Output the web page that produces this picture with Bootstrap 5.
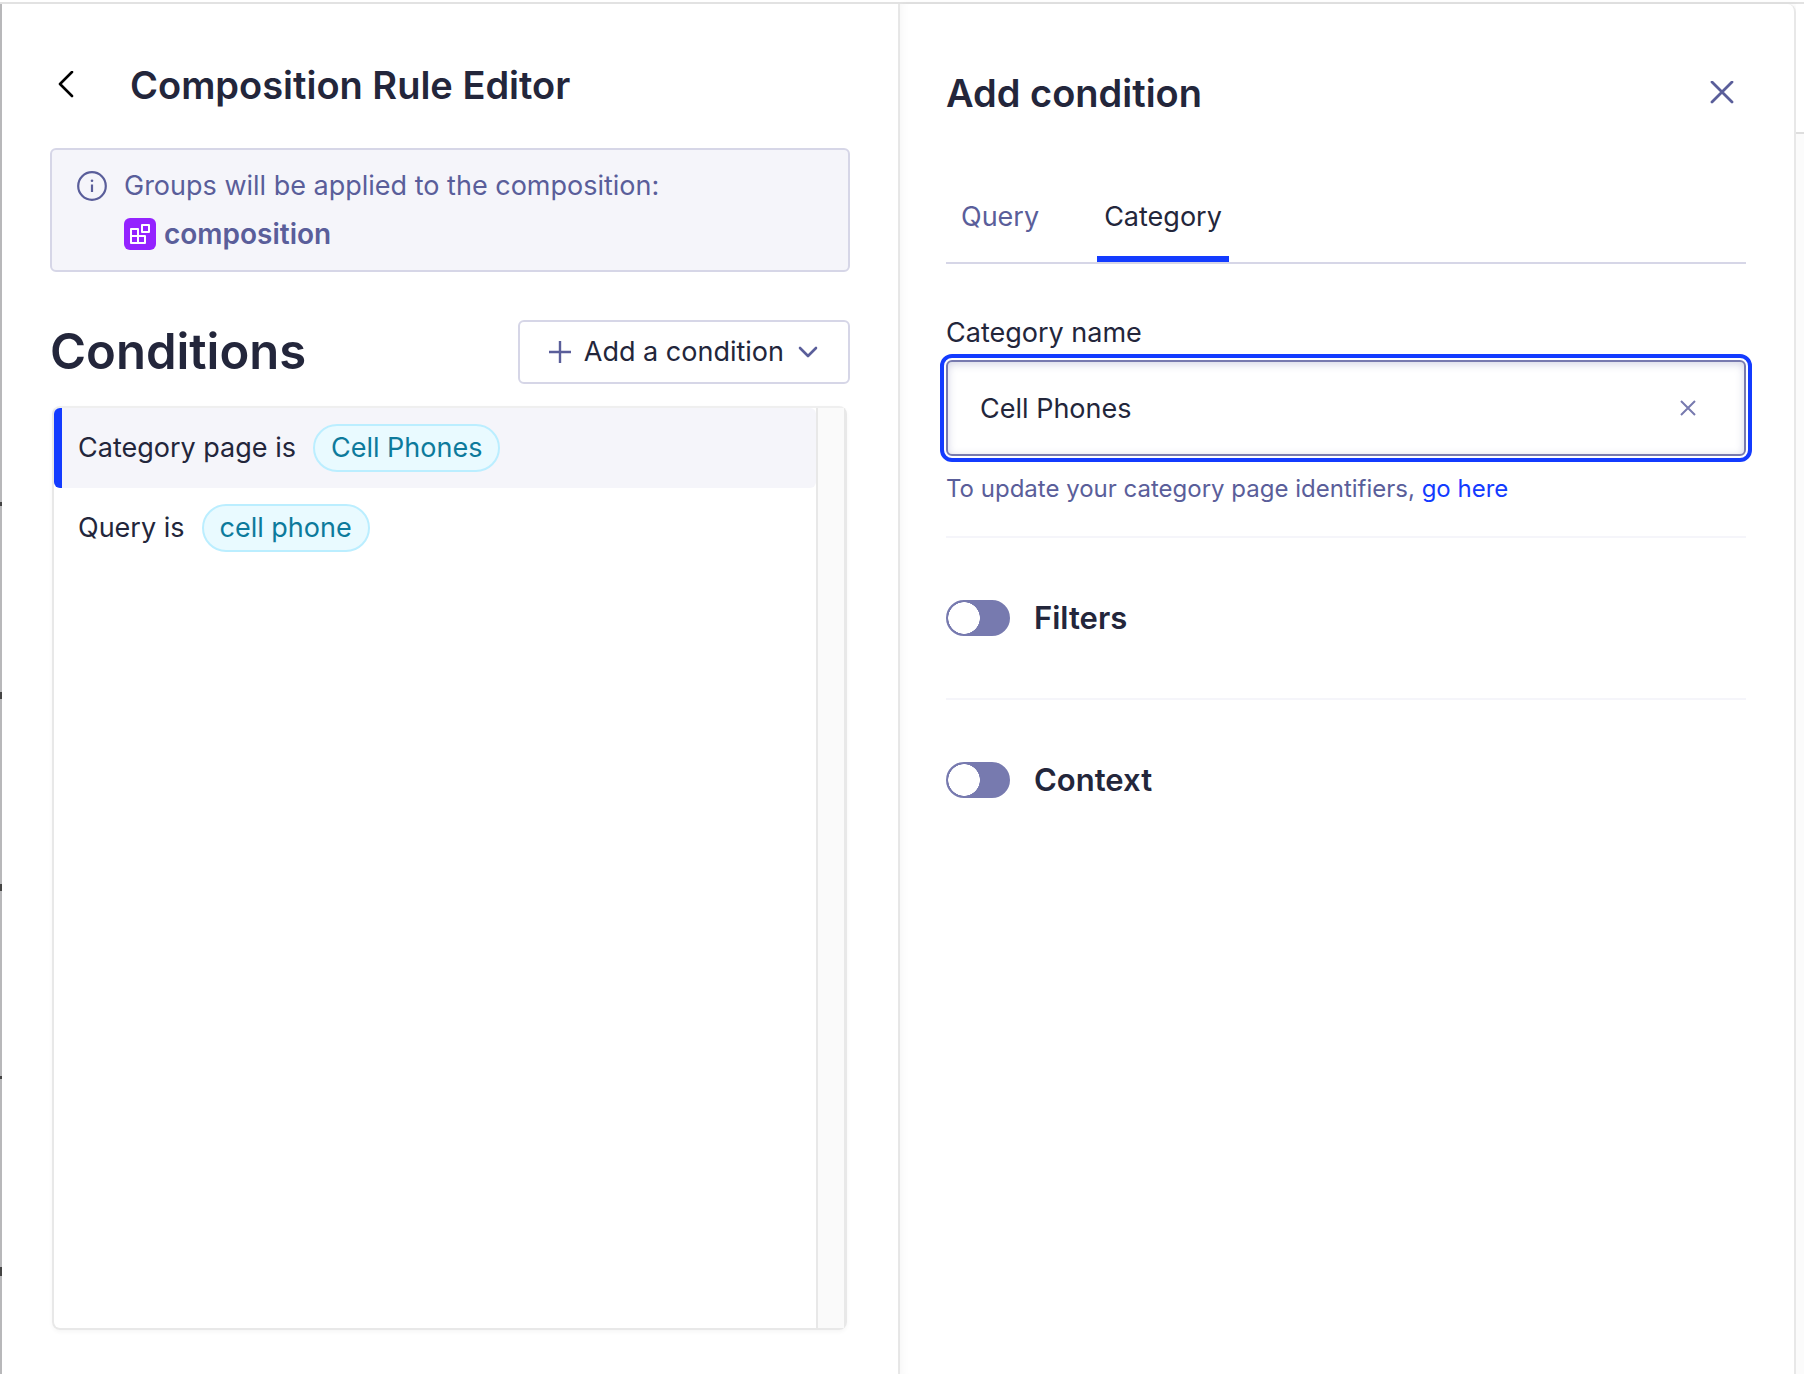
<!DOCTYPE html>
<html lang="en">
<head>
<meta charset="utf-8">
<meta name="viewport" content="width=device-width, initial-scale=1">
<title>Composition Rule Editor</title>
<link href="https://cdn.jsdelivr.net/npm/bootstrap@5.3.0/dist/css/bootstrap.min.css" rel="stylesheet">
<style>
:root{--ink:#23263b;--muted:#5a5e9a;--soft:#777aaf;--line:#d6d6e7;--blue:#133bff;--tint:#f5f5fa;--edge:#e8e8e8}
body{font-family:Inter,"Liberation Sans",sans-serif;font-size:27px;line-height:48px;color:var(--ink);background:#fff}
svg{flex:none;display:block;fill:none;stroke:currentColor}
.muted{color:var(--muted)}
.shell{border-top:2px solid #e2e2e2;margin-top:2px;min-height:calc(100vh - 2px)}
.page-edge{width:2px;background:
 linear-gradient(#444,#444) 0 498px/2px 4px no-repeat,
 linear-gradient(#444,#444) 0 688px/2px 7px no-repeat,
 linear-gradient(#444,#444) 0 880px/2px 7px no-repeat,
 linear-gradient(#444,#444) 0 1072px/2px 3px no-repeat,
 linear-gradient(#444,#444) 0 1263px/2px 9px no-repeat,#b8b8ba}
.pane{flex:1 1 0;min-width:0;border-right:2px solid var(--edge)}
.pane-list{padding:57px 48px 44px 48px}
.pane-form{padding:65px 48px 48px 46px;border-top-right-radius:8px;box-shadow:inset 8px 0 8px -6px #0000000a,2px 0 6px #0000000a}
.backdrop-page{width:8px;background:#fbfbfb}
.backdrop-page div{height:130px;background:#fff;border-bottom:2px solid #dedede}
.title{font-size:38px;line-height:48px;font-weight:600;margin:0}
.title-lg{font-size:49px;line-height:64px;font-weight:600;margin:0}
.plain{border:0;background:none;padding:0;color:inherit}
.head-gap{gap:56px;padding-left:8px}
.note{background:var(--tint);border:2px solid var(--line);border-radius:6px;padding:12px 25px;margin-top:39px;gap:17px;color:var(--muted)}
.note .glyph{margin-top:9px}
.comp-name{font-size:28px;font-weight:600}
.comp-tile{background:#9423ff;border-radius:6px;color:#fff}
.btn-add{border:2px solid var(--line);border-radius:6px;height:64px;padding:0 28px;font-size:27px;line-height:48px;color:var(--ink);gap:12px}
.btn-add svg{color:var(--muted)}
.rules{margin:22px 3px 0 2px;border:2px solid var(--edge);border-right-width:3px;border-top-color:#efefef;border-radius:8px;box-shadow:0 2px 4px #0000000a}
.rule{height:80px;padding:0 16px 0 24px;border:0;gap:17px;color:var(--ink)}
.rules .rule{border-radius:6px}
.rule.selected{background:var(--tint);border-left:8px solid var(--blue);padding-left:16px}
.tag{border:2px solid #bbeeff;background:#e9faff;color:#0d7a9c;border-radius:24px;padding:0 16px;line-height:44px}
.track{width:28px;border-left:2px solid var(--edge);background:#fafafa}
.tabs{border-bottom:2px solid var(--line);margin-top:59px;gap:51px;padding-left:8px}
.tabs .nav-link{color:var(--muted);padding:17px 7px 15px;border-radius:0;border-bottom:6px solid transparent}
.tabs .nav-link.active{color:var(--ink);border-bottom-color:var(--blue)}
.field-label{margin-top:45px;margin-bottom:3px}
.field{font-size:27px;line-height:48px;height:96px;padding:0 96px 0 32px;border:2px solid var(--soft);border-radius:6px;color:var(--ink);box-shadow:inset 0 2px 8px #777aaf55;outline:4px solid var(--blue);outline-offset:2px}
.field:focus{border-color:var(--soft);color:var(--ink);box-shadow:inset 0 2px 8px #777aaf55;outline:4px solid var(--blue)}
.clear{right:50px;top:40px;color:var(--soft)}
.help{font-size:24px;line-height:32px;color:var(--muted);padding:17px 0 31px}
.help a{color:var(--blue);text-decoration:none}
.option{border-top:2px solid var(--tint);padding:57px 0;gap:24px;font-size:31px;line-height:46px;font-weight:600}
.option .form-check-input{width:64px;height:36px;margin:0;border:2px solid var(--soft);background-color:var(--soft);background-image:radial-gradient(circle closest-side,#fff 97%,transparent);background-size:32px 32px;background-position:left center;background-repeat:no-repeat;border-radius:18px;flex:none}
</style>
<script src="https://cdn.jsdelivr.net/npm/bootstrap@5.3.0/dist/js/bootstrap.bundle.min.js"></script>
</head>
<body>
<div class="shell d-flex">
  <div class="page-edge"></div>

  <main class="pane pane-list d-flex flex-column">
    <header class="d-flex align-items-center head-gap">
      <button class="plain" type="button" aria-label="Back"><svg width="16" height="28" viewBox="0 0 16 28" stroke-width="2.6" stroke-linecap="round" stroke-linejoin="round" style="color:#000"><path d="M14 1 2 13l12 12"/></svg></button>
      <h1 class="title">Composition Rule Editor</h1>
    </header>

    <section class="note d-flex">
      <svg class="glyph" width="30" height="30" viewBox="0 0 30 30" stroke-width="2.2"><circle cx="15" cy="15" r="13.800"/><path d="M15 13.500v7.500"/><circle cx="15" cy="9.800" r="1.300" fill="currentColor" stroke="none"/></svg>
      <div>
        <div>Groups will be applied to the composition:</div>
        <div class="d-flex align-items-center gap-2 comp-name">
          <svg class="comp-tile" width="32" height="32" viewBox="0 0 32 32" stroke-width="2" stroke-linejoin="round"><path d="M7 11h7v14H7zM7 18h14v7H7zM18 7h7v7h-7z"/></svg>
          composition
        </div>
      </div>
    </section>

    <div class="d-flex align-items-center justify-content-between mt-5">
      <h2 class="title-lg">Conditions</h2>
      <button class="btn btn-add d-flex align-items-center" type="button">
        <svg width="24" height="24" viewBox="0 0 24 24" stroke-width="2.400"><path d="M12 1v22M1 12h22"/></svg>
        Add a condition
        <svg width="24" height="24" viewBox="0 0 24 24" stroke-width="2.600" stroke-linecap="round" stroke-linejoin="round"><path d="m4 8 8 8 8-8"/></svg>
      </button>
    </div>

    <div class="rules d-flex flex-grow-1">
      <div class="list-group flex-grow-1">
        <a href="#" class="list-group-item rule selected d-flex align-items-center">Category page is <span class="tag">Cell Phones</span></a>
        <a href="#" class="list-group-item rule d-flex align-items-center">Query is <span class="tag">cell phone</span></a>
      </div>
      <div class="track"></div>
    </div>
  </main>

  <aside class="pane pane-form">
    <header class="d-flex align-items-center justify-content-between">
      <h2 class="title">Add condition</h2>
      <button class="plain px-2 me-1" type="button" aria-label="Close"><svg class="muted" width="24" height="24" viewBox="0 0 24 24" stroke-width="2.800" stroke-linecap="round"><path d="m2 1 20 20M22 1 2 21"/></svg></button>
    </header>

    <nav class="nav tabs">
      <a class="nav-link" href="#">Query</a>
      <a class="nav-link active" href="#" aria-current="page">Category</a>
    </nav>

    <form>
      <label class="field-label d-block" for="category">Category name</label>
      <div class="position-relative">
        <input class="form-control field" id="category" type="text" value="Cell Phones">
        <button class="plain clear position-absolute" type="button" aria-label="Clear"><svg width="16" height="16" viewBox="0 0 16 16" stroke-width="2"><path d="m1 1 14 14M15 1 1 15"/></svg></button>
      </div>
      <div class="help">To update your category page identifiers, <a href="#">go here</a></div>

      <div class="option d-flex align-items-center">
        <input class="form-check-input" type="checkbox" role="switch" id="filters">
        <label for="filters">Filters</label>
      </div>
      <div class="option d-flex align-items-center">
        <input class="form-check-input" type="checkbox" role="switch" id="context">
        <label for="context">Context</label>
      </div>
    </form>
  </aside>

  <div class="backdrop-page"><div></div></div>
</div>
</body>
</html>
